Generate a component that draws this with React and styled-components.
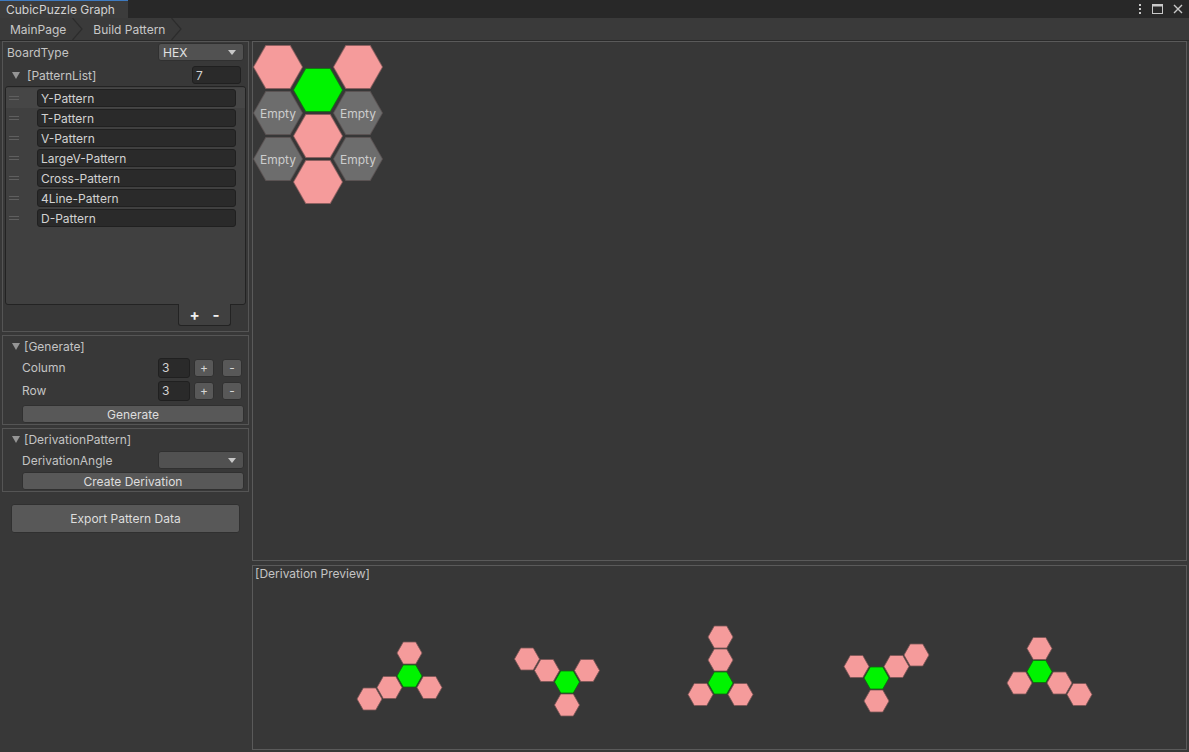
import React from 'react';
import styled, { createGlobalStyle, css } from 'styled-components';

const GlobalStyle = createGlobalStyle`
  html, body {
    margin: 0;
    padding: 0;
    background: #383838;
  }
  body {
    font-family: Inter, "Noto Sans", sans-serif;
    font-size: 12px;
    color: #c4c4c4;
  }
  * {
    box-sizing: border-box;
  }
`;

const Window = styled.div`
  width: 1189px;
  height: 752px;
  display: flex;
  flex-direction: column;
  overflow: hidden;
  background: #383838;
`;

const TitleBar = styled.div`
  height: 18px;
  flex-shrink: 0;
  display: flex;
  justify-content: space-between;
  background: #282828;
`;

const Tab = styled.div`
  width: 128px;
  display: flex;
  align-items: center;
  padding-left: 6px;
  background: #3c3c3c;
  border-top: 1px solid #3e7ac0;
  color: #d2d2d2;
  font-size: 12px;
`;

const WindowIcons = styled.div`
  display: flex;
  align-items: center;
  gap: 10px;
  padding-right: 6px;
`;

const Breadcrumbs = styled.div`
  height: 23px;
  flex-shrink: 0;
  display: flex;
  background: #3a3a3a;
  border-bottom: 1px solid #2a2a2a;
`;

const Crumb = styled.div`
  display: flex;
  align-items: center;
  gap: ${({ $gap }) => $gap}px;
  padding-left: 10px;
  color: #c8c8c8;
  font-size: 12px;
`;

const Body = styled.div`
  flex: 1;
  display: flex;
  min-height: 0;
`;

const LeftPanel = styled.div`
  width: 252px;
  flex-shrink: 0;
  display: flex;
  flex-direction: column;
  gap: 3px;
  padding: 0 3px 0 2px;
`;

const Section = styled.div`
  border: 1px solid #555555;
  display: flex;
  flex-direction: column;
  padding-bottom: ${({ $pb }) => $pb || 0}px;
`;

const Row = styled.div`
  height: ${({ $h }) => $h || 20}px;
  display: flex;
  align-items: center;
  padding-left: ${({ $indent }) => $indent || 4}px;
  padding-right: 4px;
`;

const Label = styled.div`
  width: ${({ $w }) => $w}px;
  flex-shrink: 0;
  color: #c4c4c4;
  font-size: 12px;
  white-space: nowrap;
`;

const Foldout = styled.div`
  height: ${({ $h }) => $h || 20}px;
  margin-top: ${({ $mt }) => $mt || 0}px;
  display: flex;
  align-items: center;
  padding-left: 9px;
  padding-right: 6px;
  color: #c4c4c4;
  font-size: 12px;
`;

const Arrow = styled.span`
  width: 0;
  height: 0;
  border-left: 4px solid transparent;
  border-right: 4px solid transparent;
  border-top: 7px solid #959595;
  margin-right: ${({ $mr }) => $mr}px;
`;

const fieldBase = css`
  height: 18px;
  display: flex;
  align-items: center;
  border-radius: 3px;
  font-size: 12px;
`;

const Dropdown = styled.div`
  ${fieldBase}
  width: 86px;
  padding: 0 7px 0 4px;
  background: #515151;
  border: 1px solid #303030;
  color: #e2e2e2;
  &::after {
    content: '';
    margin-left: auto;
    border-left: 4px solid transparent;
    border-right: 4px solid transparent;
    border-top: 5px solid #c8c8c8;
  }
`;

const InputField = styled.div`
  ${fieldBase}
  width: ${({ $w }) => $w}px;
  height: ${({ $h }) => $h || 18}px;
  padding-left: 3px;
  background: #2a2a2a;
  border: 1px solid #202020;
  color: #d2d2d2;
`;

const ListBox = styled.div`
  height: 219px;
  margin: 0 2px;
  padding-top: 1px;
  background: #404040;
  border: 1px solid #232323;
  border-radius: 3px;
`;

const ListRow = styled.div`
  height: 20px;
  display: flex;
  align-items: center;
  padding-left: 3px;
  padding-right: 9px;
  background: ${({ $hover }) => ($hover ? '#464646' : 'transparent')};
`;

const Handle = styled.div`
  width: 10px;
  height: 4px;
  margin-right: 18px;
  border-top: 1px solid #5f5f5f;
  border-bottom: 1px solid #5f5f5f;
`;

const ItemField = styled(InputField)`
  flex: 1;
`;

const ListFooter = styled.div`
  display: flex;
  justify-content: flex-end;
  padding-right: 17px;
  margin-top: -1px;
`;

const FooterTab = styled.div`
  width: 53px;
  height: 22px;
  display: flex;
  align-items: center;
  justify-content: center;
  gap: 13px;
  background: #404040;
  border: 1px solid #232323;
  border-top: none;
  border-radius: 0 0 3px 3px;
  color: #f0f0f0;
  font-size: 15px;
  font-weight: 700;
`;

const SmallButton = styled.div`
  width: 20px;
  height: 18px;
  margin-left: ${({ $ml }) => $ml}px;
  display: flex;
  align-items: center;
  justify-content: center;
  background: #585858;
  border: 1px solid #303030;
  border-radius: 3px;
  color: #d6d6d6;
  font-size: 12px;
`;

const Button = styled.div`
  height: ${({ $h }) => $h || 18}px;
  margin: ${({ $m }) => $m};
  display: flex;
  align-items: center;
  justify-content: center;
  background: #585858;
  border: 1px solid #303030;
  border-radius: 3px;
  color: #dedede;
  font-size: 12px;
`;

const RightPanel = styled.div`
  width: 935px;
  flex-shrink: 0;
  display: flex;
  flex-direction: column;
  gap: 4px;
  padding-bottom: 2px;
`;

const CanvasBox = styled.div`
  height: 520px;
  flex-shrink: 0;
  padding-top: 3px;
  background: #373737;
  border: 1px solid #5a5a5a;
`;

const HexGrid = styled.div`
  display: flex;
`;

const HexColumn = styled.div`
  display: flex;
  flex-direction: column;
  gap: 2px;
  padding-top: ${({ $offset }) => ($offset ? 23 : 0)}px;
  & + & {
    margin-left: -10px;
  }
`;

const hexClip = 'polygon(25% 0, 75% 0, 100% 50%, 75% 100%, 25% 100%, 0 50%)';

const HexCell = styled.div`
  width: 50px;
  height: 44px;
  position: relative;
  display: flex;
  align-items: center;
  justify-content: center;
  clip-path: ${hexClip};
  background: ${({ $edge }) => $edge};
  &::before {
    content: '';
    position: absolute;
    inset: 1px;
    clip-path: ${hexClip};
    background: ${({ $fill }) => $fill};
  }
`;

const HexText = styled.span`
  position: relative;
  color: #cdcdcd;
  font-size: 12px;
`;

const PreviewBox = styled.div`
  flex: 1;
  display: flex;
  flex-direction: column;
  background: #373737;
  border: 1px solid #5a5a5a;
`;

const PreviewTitle = styled.div`
  height: 16px;
  line-height: 15px;
  padding-left: 2px;
  color: #c4c4c4;
  font-size: 12px;
`;

const CELL = {
  pink: { fill: '#f59b9b', edge: '#8e6060' },
  green: { fill: '#00f400', edge: '#127a12' },
  empty: { fill: '#6d6d6d', edge: '#5a5353' },
};

const gridColumns = [
  { offset: false, cells: ['pink', 'empty', 'empty'] },
  { offset: true, cells: ['green', 'pink', 'pink'] },
  { offset: false, cells: ['pink', 'empty', 'empty'] },
];

const patterns = [
  'Y-Pattern',
  'T-Pattern',
  'V-Pattern',
  'LargeV-Pattern',
  'Cross-Pattern',
  '4Line-Pattern',
  'D-Pattern',
];

// neighbour steps for flat-top hexes in the preview
const DIR = {
  U: [0, -23],
  D: [0, 23],
  UL: [-20, -11.5],
  UR: [20, -11.5],
  DL: [-20, 11.5],
  DR: [20, 11.5],
};

const derivations = [
  { c: [409.5, 676], cells: [['U'], ['DR'], ['DL'], ['DL', 'DL']] },
  { c: [567, 682], cells: [['UL'], ['UL', 'UL'], ['UR'], ['D']] },
  { c: [720.5, 683], cells: [['U'], ['U', 'U'], ['DL'], ['DR']] },
  { c: [876.5, 678], cells: [['UL'], ['UR'], ['UR', 'UR'], ['D']] },
  { c: [1039.5, 671.5], cells: [['U'], ['DL'], ['DR'], ['DR', 'DR']] },
];

const hexPoints = (cx, cy, w = 25, h = 22) =>
  [
    [cx - w / 2, cy],
    [cx - w / 4, cy - h / 2],
    [cx + w / 4, cy - h / 2],
    [cx + w / 2, cy],
    [cx + w / 4, cy + h / 2],
    [cx - w / 4, cy + h / 2],
  ]
    .map((p) => p.join(','))
    .join(' ');

const PreviewHexes = () => (
  <svg width="933" height="167" viewBox="253 582 933 167">
    {derivations.map(({ c, cells }, i) => (
      <g key={i}>
        {cells.map((steps, j) => {
          const [x, y] = steps.reduce(([px, py], s) => [px + DIR[s][0], py + DIR[s][1]], c);
          return (
            <polygon key={j} points={hexPoints(x, y)} fill={CELL.pink.fill} stroke="#7a5656" strokeWidth="0.8" />
          );
        })}
        <polygon points={hexPoints(c[0], c[1])} fill={CELL.green.fill} stroke="#0d6a0d" strokeWidth="0.8" />
      </g>
    ))}
  </svg>
);

const Chevron = () => (
  <svg width="11" height="22" viewBox="0 0 11 22">
    <path d="M0.5 0 L10 11 L0.5 22" fill="none" stroke="#2c2c2c" strokeWidth="1.2" />
  </svg>
);

const KebabIcon = () => (
  <svg width="4" height="12" viewBox="0 0 4 12">
    <rect x="1" y="1" width="2" height="2" fill="#c8c8c8" />
    <rect x="1" y="5" width="2" height="2" fill="#c8c8c8" />
    <rect x="1" y="9" width="2" height="2" fill="#c8c8c8" />
  </svg>
);

const MaximizeIcon = () => (
  <svg width="11" height="10" viewBox="0 0 11 10">
    <rect x="0.5" y="0.5" width="10" height="9" fill="none" stroke="#c8c8c8" />
    <rect x="0.5" y="0.5" width="10" height="2" fill="#c8c8c8" />
  </svg>
);

const CloseIcon = () => (
  <svg width="10" height="10" viewBox="0 0 10 10">
    <path d="M1 1 L9 9 M9 1 L1 9" stroke="#c8c8c8" strokeWidth="1.4" />
  </svg>
);

export default function App() {
  return (
    <Window>
      <GlobalStyle />
      <TitleBar>
        <Tab>CubicPuzzle Graph</Tab>
        <WindowIcons>
          <KebabIcon />
          <MaximizeIcon />
          <CloseIcon />
        </WindowIcons>
      </TitleBar>
      <Breadcrumbs>
        <Crumb $gap={6}>
          MainPage
          <Chevron />
        </Crumb>
        <Crumb $gap={6}>
          Build Pattern
          <Chevron />
        </Crumb>
      </Breadcrumbs>
      <Body>
        <LeftPanel>
          <Section $pb={5}>
            <Row>
              <Label $w={151}>BoardType</Label>
              <Dropdown>HEX</Dropdown>
            </Row>
            <Foldout $h={22} $mt={2}>
              <Arrow $mr={7} />
              <Label $w={165}>[PatternList]</Label>
              <InputField $w={49}>7</InputField>
            </Foldout>
            <ListBox>
              {patterns.map((name, i) => (
                <ListRow key={name} $hover={i === 0}>
                  <Handle />
                  <ItemField>{name}</ItemField>
                </ListRow>
              ))}
            </ListBox>
            <ListFooter>
              <FooterTab>
                <span>+</span>
                <span>-</span>
              </FooterTab>
            </ListFooter>
          </Section>

          <Section>
            <Foldout>
              <Arrow $mr={4} />
              [Generate]
            </Foldout>
            <Row $h={23} $indent={19}>
              <Label $w={136}>Column</Label>
              <InputField $w={32} $h={20}>3</InputField>
              <SmallButton $ml={4}>+</SmallButton>
              <SmallButton $ml={8}>-</SmallButton>
            </Row>
            <Row $h={23} $indent={19}>
              <Label $w={136}>Row</Label>
              <InputField $w={32} $h={20}>3</InputField>
              <SmallButton $ml={4}>+</SmallButton>
              <SmallButton $ml={8}>-</SmallButton>
            </Row>
            <Button $m="3px 4px 1px 19px">Generate</Button>
          </Section>

          <Section $pb={1}>
            <Foldout>
              <Arrow $mr={4} />
              [DerivationPattern]
            </Foldout>
            <Row $h={22} $indent={19}>
              <Label $w={136}>DerivationAngle</Label>
              <Dropdown />
            </Row>
            <Button $m="1px 4px 0 19px">Create Derivation</Button>
          </Section>

          <Button $h={29} $m="9px 9px 0 9px">Export Pattern Data</Button>
        </LeftPanel>

        <RightPanel>
          <CanvasBox>
            <HexGrid>
              {gridColumns.map((col, i) => (
                <HexColumn key={i} $offset={col.offset}>
                  {col.cells.map((kind, j) => (
                    <HexCell key={j} $fill={CELL[kind].fill} $edge={CELL[kind].edge}>
                      {kind === 'empty' && <HexText>Empty</HexText>}
                    </HexCell>
                  ))}
                </HexColumn>
              ))}
            </HexGrid>
          </CanvasBox>
          <PreviewBox>
            <PreviewTitle>[Derivation Preview]</PreviewTitle>
            <PreviewHexes />
          </PreviewBox>
        </RightPanel>
      </Body>
    </Window>
  );
}
